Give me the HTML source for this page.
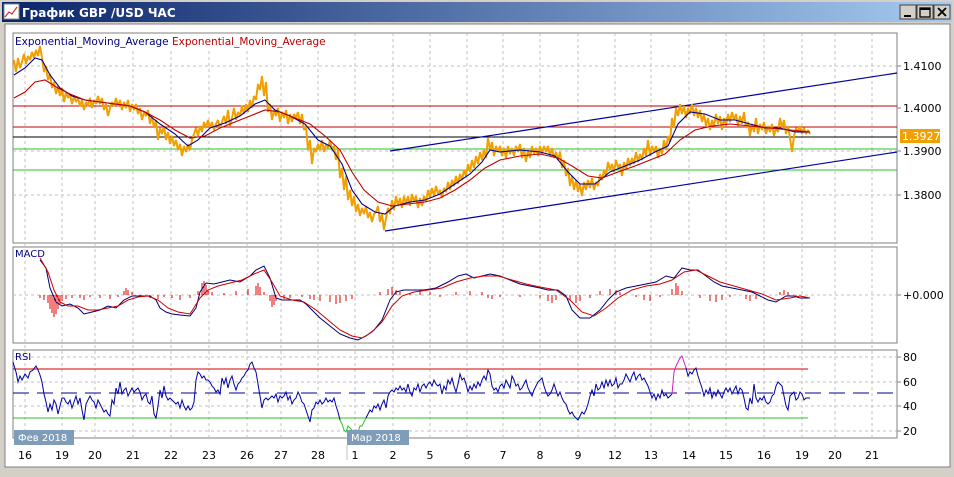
<!DOCTYPE html>
<html><head><meta charset="utf-8"><style>
html,body{margin:0;padding:0;width:954px;height:477px;overflow:hidden;background:#d4d0c8;font-family:"Liberation Sans",sans-serif}
svg{display:block}
text{font-family:"DejaVu Sans","Liberation Sans",sans-serif}
</style></head><body>
<svg width="954" height="477" viewBox="0 0 954 477" xmlns="http://www.w3.org/2000/svg">
<defs><linearGradient id="tb" x1="0" x2="1" y1="0" y2="0"><stop offset="0" stop-color="#0a246a"/><stop offset="1" stop-color="#a6caf0"/></linearGradient></defs>
<rect x="0" y="0" width="954" height="477" fill="#d4d0c8"/>
<rect x="2" y="2" width="950" height="20" fill="url(#tb)"/>
<rect x="4" y="4" width="15" height="15" fill="#fff" stroke="#888"/>
<polyline points="5,17 9,12 12,14 17,7" fill="none" stroke="#d03030" stroke-width="1.2"/>
<text x="22" y="17" fill="#fff" font-size="12" font-weight="bold" font-family="Liberation Sans">График GBP /USD  ЧАС</text>
<g stroke="#404040" fill="#d4d0c8"><rect x="900" y="5" width="16" height="14"/><rect x="917" y="5" width="16" height="14"/><rect x="934" y="5" width="16" height="14"/></g>
<rect x="904" y="15" width="7" height="2" fill="#000"/>
<rect x="920" y="8" width="10" height="9" fill="none" stroke="#000" stroke-width="1.3"/><line x1="920" y1="9" x2="930" y2="9" stroke="#000" stroke-width="2"/>
<path d="M938 8l8 8M946 8l-8 8" stroke="#000" stroke-width="1.8"/>
<rect x="5" y="24" width="945" height="443" fill="#fff" stroke="#808080"/>
<g fill="#fff" stroke="#808080" shape-rendering="crispEdges"><rect x="13" y="33" width="884" height="210"/><rect x="13" y="247" width="884" height="96"/><rect x="13" y="350" width="884" height="88"/></g>
<g stroke="#c0c0c0" stroke-dasharray="3,3" shape-rendering="crispEdges">
<path d="M25 33V438M62 33V438M95 33V438M133 33V438M171 33V438M209 33V438M247 33V438M281 33V438M318 33V438M355 33V438M393 33V438M430 33V438M467 33V438M503 33V438M540 33V438M578 33V438M615 33V438M651 33V438M689 33V438M726 33V438M764 33V438M802 33V438M835 33V438M872 33V438"/>
<path d="M13 66H897M13 151H897M13 195H897M13 295H897M13 357H897M13 382H897M13 406H897M13 431H897"/>
</g>
<rect x="14" y="34" width="306" height="14" fill="#fff"/>
<text x="15" y="45" font-size="10.5" fill="#000080">Exponential_Moving_Average <tspan fill="#c00000">Exponential_Moving_Average</tspan></text>
<g shape-rendering="crispEdges">
<line x1="13" y1="106" x2="897" y2="106" stroke="#c00000"/>
<line x1="13" y1="127" x2="897" y2="127" stroke="#c00000"/>
<line x1="13" y1="137" x2="897" y2="137" stroke="#000"/>
<line x1="13" y1="149" x2="897" y2="149" stroke="#2ec02e"/>
<line x1="13" y1="170" x2="897" y2="170" stroke="#2ec02e"/>
</g>
<line x1="390" y1="151" x2="897" y2="73" stroke="#0000a0" stroke-width="1.2"/>
<line x1="385" y1="231" x2="897" y2="152" stroke="#0000a0" stroke-width="1.2"/>
<polyline fill="none" stroke="#f0a000" stroke-width="2" stroke-linejoin="bevel" points="14,60 16,72 18,58 20,68 22,62 24,54 26,64 28,56 30,60 32,52 34,58 36,50 38,56 40,46 42,58 44,72 46,66 48,80 50,74 52,88 54,82 56,94 58,86 60,96 62,88 64,102 66,92 68,98 70,94 72,104 74,96 76,102 78,98 80,106 82,100 84,110 86,102 88,106 90,98 92,108 94,100 96,104 98,96 100,104 102,98 104,110 106,104 108,116 110,108 112,102 114,106 116,98 118,106 120,100 122,110 124,102 126,108 128,100 130,112 132,104 134,110 136,104 138,114 140,108 142,120 144,112 146,116 148,110 150,124 152,116 154,128 156,120 158,140 160,128 162,134 164,126 166,140 168,132 170,144 172,136 174,146 176,140 178,150 180,144 182,156 184,146 186,152 188,144 190,150 192,140 194,134 196,128 198,136 200,126 202,132 204,122 206,128 208,120 210,128 212,122 214,130 216,124 218,120 220,128 222,122 224,116 226,124 228,110 230,126 232,118 234,108 236,120 238,112 240,116 242,106 244,114 246,104 248,112 250,100 252,108 254,96 256,100 258,84 260,90 262,76 264,96 266,82 268,112 270,104 272,120 274,110 276,116 278,108 280,122 282,112 284,118 286,110 288,124 290,114 292,122 294,114 296,118 298,112 300,124 302,114 304,130 306,126 308,150 310,140 312,164 314,148 316,152 318,144 320,150 322,140 324,152 326,144 328,148 330,140 332,150 334,146 336,160 338,150 340,178 342,168 344,190 346,176 348,200 350,190 352,206 354,196 356,212 358,204 360,216 362,208 364,214 366,206 368,218 370,212 372,222 374,214 376,212 378,206 380,222 382,214 384,230 386,218 388,208 390,214 392,200 394,210 396,196 398,206 400,198 402,208 404,196 406,204 408,196 410,206 412,194 414,202 416,196 418,208 420,198 422,206 424,196 426,202 428,190 430,198 432,188 434,196 436,186 438,194 440,190 442,198 444,188 446,192 448,182 450,190 452,180 454,186 456,176 458,184 460,174 462,180 464,170 466,176 468,164 470,172 472,160 474,168 476,156 478,164 480,152 482,160 484,150 486,158 488,138 490,150 492,142 494,156 496,146 498,152 500,146 502,156 504,148 506,158 508,146 510,154 512,148 514,156 516,146 518,152 520,144 522,158 524,148 526,162 528,150 530,158 532,146 534,154 536,148 538,156 540,146 542,154 544,146 546,152 548,146 550,156 552,148 554,158 556,152 558,160 560,152 562,168 564,160 566,176 568,168 570,186 572,176 574,190 576,180 578,192 580,184 582,196 584,182 586,190 588,180 590,188 592,178 594,190 596,182 598,186 600,174 602,180 604,170 606,176 608,162 610,170 612,164 614,172 616,160 618,168 620,164 622,176 624,162 626,170 628,158 630,166 632,158 634,164 636,152 638,162 640,154 642,160 644,148 646,156 648,140 650,156 652,146 654,152 656,146 658,158 660,148 662,154 664,140 666,150 668,136 670,142 672,118 674,128 676,108 678,116 680,104 682,114 684,106 686,118 688,108 690,114 692,104 694,116 696,108 698,118 700,110 702,122 704,114 706,126 708,118 710,130 712,120 714,126 716,114 718,124 720,116 722,130 724,118 726,126 728,114 730,122 732,112 734,120 736,114 738,126 740,116 742,124 744,112 746,128 748,122 750,136 752,124 754,132 756,118 758,134 760,124 762,130 764,122 766,134 768,126 770,132 772,124 774,136 776,128 778,132 780,118 782,128 784,120 786,134 788,126 790,138 792,152 794,136 796,128 798,132 800,126 802,134 804,128 806,134 808,130 810,134"/>
<polyline fill="none" stroke="#000090" stroke-width="1.1" points="14,75 25,68 35,58 42,60 50,75 60,88 72,96 85,100 100,102 115,104 130,106 145,112 160,124 175,134 188,146 198,140 210,128 225,123 240,116 255,104 265,100 275,110 290,116 305,124 318,140 330,146 342,164 352,190 362,204 375,212 385,214 395,206 410,202 425,200 440,194 455,184 470,174 482,162 490,150 500,152 520,150 540,152 555,156 568,172 580,184 595,184 610,172 625,166 640,160 655,152 668,146 678,124 690,112 705,114 720,120 735,120 750,124 765,128 780,128 795,132 810,132"/>
<polyline fill="none" stroke="#c00000" stroke-width="1.1" points="14,98 25,92 35,82 45,80 58,88 70,94 85,100 100,102 115,104 130,106 145,112 160,120 175,130 190,138 205,136 220,128 235,122 250,116 265,110 280,112 295,118 310,124 325,136 340,150 352,172 364,190 378,202 392,206 408,204 425,202 440,198 455,190 470,180 485,168 500,160 520,156 540,154 558,158 572,166 588,176 602,178 618,172 635,166 650,160 665,154 680,140 695,130 712,126 730,124 750,126 770,128 790,130 810,132"/>
<rect x="900" y="129" width="40" height="14" fill="#f0a000"/>
<text x="902" y="140" font-size="11" fill="#fff">1.3927</text>
<g font-size="11" fill="#000"><text x="903" y="70">1.4100</text><text x="903" y="112">1.4000</text><text x="903" y="155">1.3900</text><text x="903" y="199">1.3800</text>
<text x="903" y="299">+0.000</text><text x="903" y="361">80</text><text x="903" y="386">60</text><text x="903" y="410">40</text><text x="903" y="435">20</text></g>
<g stroke="#808080"><path d="M897 66h4M897 108h4M897 151h4M897 195h4M897 295h4M897 357h4M897 382h4M897 406h4M897 431h4"/></g>
<text x="15" y="257" font-size="10" fill="#000080">MACD</text>
<path stroke="#e00000" stroke-width="1" shape-rendering="crispEdges" d="M40 295v3M44 295v5M48 295v8M50 295v14M52 295v18M54 295v22M56 295v19M58 295v14M60 295v9M62 295v6M66 295v4M72 295v3M80 295v3M84 295v5M90 295v2M100 295v3M110 295v4M118 295v2M124 295v-4M126 295v-7M128 295v-5M132 295v-3M140 295v2M150 295v3M158 295v4M164 295v2M172 295v3M180 295v5M190 295v3M198 295v-4M202 295v-12M204 295v-14M206 295v-10M208 295v-5M212 295v-3M224 295v-2M236 295v-4M248 295v-6M256 295v-9M258 295v-12M260 295v-8M264 295v-3M270 295v6M272 295v12M274 295v10M276 295v6M284 295v4M290 295v3M302 295v2M310 295v4M314 295v5M320 295v6M330 295v7M336 295v9M340 295v8M346 295v6M352 295v4M380 295v-3M388 295v-6M392 295v-8M396 295v-5M400 295v-3M410 295v-2M420 295v-4M430 295v-3M440 295v2M456 295v-3M470 295v-4M482 295v-3M488 295v3M492 295v4M500 295v2M520 295v2M540 295v3M548 295v6M552 295v8M556 295v5M570 295v5M576 295v8M580 295v6M590 295v3M600 295v-4M610 295v-6M616 295v-5M620 295v-3M636 295v2M644 295v5M650 295v6M660 295v2M672 295v-6M676 295v-12M678 295v-9M682 295v-4M700 295v3M710 295v6M716 295v7M722 295v5M730 295v2M746 295v4M750 295v6M756 295v4M780 295v-3M784 295v-5M788 295v-3M796 295v2"/>
<polyline fill="none" stroke="#000070" stroke-width="1" points="40,260 46,268 50,288 56,302 62,306 70,304 78,308 84,314 92,312 100,310 108,306 116,308 124,300 132,296 140,296 150,296 156,300 160,308 166,312 172,314 180,315 190,316 196,308 200,292 206,283 214,284 222,282 230,280 240,282 250,276 256,270 264,266 270,278 276,298 282,300 290,300 300,300 306,304 312,310 320,318 330,326 340,334 350,338 358,340 366,336 374,330 382,320 390,300 396,292 404,290 414,290 424,290 436,288 448,282 458,276 466,274 474,278 482,276 490,274 500,276 510,280 520,284 530,286 540,288 548,290 558,290 566,296 572,310 580,318 590,318 600,310 608,300 616,292 626,288 636,286 646,284 656,282 666,276 674,278 682,268 690,270 698,270 706,276 714,282 722,286 732,288 742,290 752,292 760,296 768,300 776,302 786,296 794,296 800,298 810,298"/>
<polyline fill="none" stroke="#d00000" stroke-width="1" points="40,258 48,272 54,290 60,302 68,306 78,306 88,310 98,310 108,308 118,306 128,300 138,297 148,296 158,300 168,308 178,312 190,314 200,298 208,290 218,286 230,283 242,280 254,274 264,270 272,282 280,296 292,300 304,302 316,310 328,320 340,330 352,336 362,338 372,332 382,322 392,306 402,296 414,292 428,290 442,288 456,282 470,278 484,276 498,276 512,280 526,284 540,287 556,290 570,300 582,312 594,316 606,308 618,298 632,290 646,286 660,284 672,280 684,272 696,270 708,276 720,282 734,286 748,290 762,294 776,300 790,298 800,296 810,298"/>
<text x="15" y="360" font-size="10" fill="#000080">RSI</text>
<g shape-rendering="crispEdges">
<line x1="13" y1="369" x2="808" y2="369" stroke="#d00000"/>
<line x1="13" y1="418" x2="808" y2="418" stroke="#2ec02e"/>
<line x1="13" y1="393" x2="897" y2="393" stroke="#000090" stroke-dasharray="16,8" stroke-width="1"/>
</g>
<polyline fill="none" stroke="#0000a0" stroke-width="1" points="13,362 16,372 18,382 20,376 22,380 25,374 28,378 30,372 33,370 36,366 38,370 40,375 42,382 44,394 46,402 48,412 50,404 52,410 54,400 56,404 58,414 60,406 62,398 64,398 66,402 68,404 70,400 72,408 74,402 76,396 78,404 80,398 82,410 84,420 86,404 88,400 90,396 92,400 94,402 96,408 98,400 100,404 102,408 104,412 106,410 108,414 110,416 112,400 114,404 116,388 118,394 120,382 122,394 124,390 126,388 128,396 130,392 132,388 134,392 136,390 138,388 140,392 142,400 144,396 146,394 148,402 150,404 152,396 154,414 156,418 158,406 160,390 162,398 164,386 166,396 168,400 170,398 172,400 174,402 176,404 178,402 180,408 182,400 184,406 186,410 188,406 190,410 192,408 194,402 196,380 198,372 200,374 202,378 204,376 206,380 208,380 210,382 212,386 214,388 216,392 218,390 220,394 222,378 224,384 226,378 228,388 230,380 232,376 234,384 236,390 238,384 240,382 242,378 244,376 246,372 248,370 250,364 252,362 254,368 256,372 258,384 260,396 262,408 264,400 266,398 268,400 270,398 272,396 274,398 276,394 278,402 280,396 282,398 284,396 286,392 288,400 290,396 292,404 294,400 296,398 298,392 300,396 302,402 304,404 306,410 308,416 310,422 312,410 314,408 316,402 318,404 320,400 322,404 324,402 326,398 328,402 330,400 332,402 334,398 336,406 338,412 340,420"/>
<polyline fill="none" stroke="#2ec02e" stroke-width="1" points="340,420 342,424 344,430 346,432 348,426 350,428 352,430 354,432 356,430 358,432 360,426 362,426 364,422 366,418"/>
<polyline fill="none" stroke="#0000a0" stroke-width="1" points="366,418 368,414 370,410 372,412 374,406 376,408 378,404 380,410 382,404 384,400 386,408 388,396 390,392 392,390 394,392 396,388 398,390 400,386 402,390 404,388 406,392 408,384 410,392 412,396 414,388 416,390 418,384 420,392 422,386 424,384 426,388 428,384 430,382 432,386 434,380 436,384 438,386 440,384 442,394 444,386 446,390 448,380 450,384 452,378 454,386 456,392 458,384 460,374 462,380 464,378 466,384 468,392 470,386 472,390 474,384 476,388 478,382 480,386 482,380 484,376 486,380 488,370 490,374 492,386 494,390 496,388 498,392 500,386 502,384 504,388 506,380 508,384 510,388 512,376 514,380 516,386 518,384 520,390 522,388 524,384 526,380 528,388 530,392 532,396 534,390 536,386 538,382 540,380 542,378 544,386 546,392 548,396 550,394 552,390 554,384 556,390 558,396 560,392 562,398 564,402 566,404 568,410 570,414 572,412 574,416 576,418 578,420 580,416 582,412 584,414 586,410 588,404 590,396 592,390 594,396 596,384 598,390 600,388 602,382 604,388 606,380 608,386 610,380 612,386 614,384 616,378 618,388 620,384 622,384 624,380 626,374 628,378 630,382 632,376 634,372 636,380 638,376 640,374 642,380 644,378 646,382 648,386 650,392 652,398 654,394 656,400 658,394 660,398 662,390 664,396 666,394 668,398 670,396 672,394"/>
<polyline fill="none" stroke="#d020d0" stroke-width="1" points="672,394 674,372 676,366 678,362 680,358 682,356 684,362 686,368"/>
<polyline fill="none" stroke="#0000a0" stroke-width="1" points="686,368 688,376 690,372 692,374 694,370 696,368 698,376 700,382 702,388 704,396 706,390 708,394 710,388 712,398 714,392 716,396 718,390 720,394 722,398 724,392 726,388 728,392 730,388 732,394 734,390 736,386 738,394 740,388 742,390 744,398 746,408 748,410 750,398 752,404 754,384 756,398 758,402 760,398 762,400 764,396 766,402 768,404 770,402 772,396 774,394 776,386 778,382 780,384 782,386 784,396 786,406 788,410 790,396 792,394 794,392 796,400 798,398 800,392 802,394 804,400 806,398 810,398"/>
<rect x="14" y="430" width="60" height="15" fill="#7f9db9"/><text x="18" y="441" font-size="10" fill="#fff">Фев 2018</text>
<rect x="347" y="430" width="62" height="15" fill="#7f9db9"/><text x="351" y="441" font-size="10" fill="#fff">Мар 2018</text>
<line x1="347" y1="445" x2="347" y2="460" stroke="#c0c0c0"/>
<g font-size="11" fill="#000" text-anchor="middle">
<text x="25" y="459">16</text><text x="62" y="459">19</text><text x="95" y="459">20</text><text x="133" y="459">21</text><text x="171" y="459">22</text><text x="209" y="459">23</text><text x="247" y="459">26</text><text x="281" y="459">27</text><text x="318" y="459">28</text><text x="355" y="459">1</text><text x="393" y="459">2</text><text x="430" y="459">5</text><text x="467" y="459">6</text><text x="503" y="459">7</text><text x="540" y="459">8</text><text x="578" y="459">9</text><text x="615" y="459">12</text><text x="651" y="459">13</text><text x="689" y="459">14</text><text x="726" y="459">15</text><text x="764" y="459">16</text><text x="802" y="459">19</text><text x="835" y="459">20</text><text x="872" y="459">21</text></g>
</svg>
</body></html>
